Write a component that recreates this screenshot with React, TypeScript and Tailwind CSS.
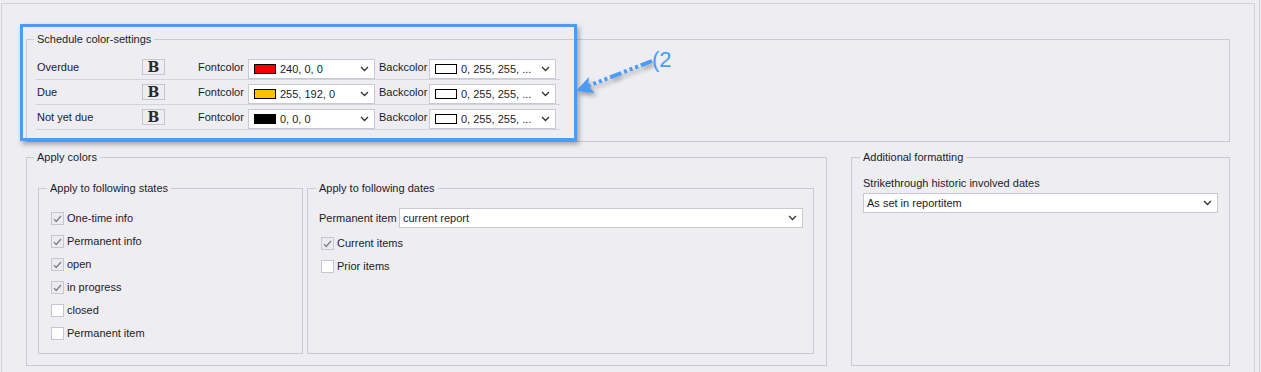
import React from 'react';

const rows = [
  { label: 'Overdue', swatch: 'bg-[#f00000]', value: '240, 0, 0' },
  { label: 'Due', swatch: 'bg-[#ffc000]', value: '255, 192, 0' },
  { label: 'Not yet due', swatch: 'bg-[#000000]', value: '0, 0, 0' },
];

const states = [
  { label: 'One-time info', checked: true },
  { label: 'Permanent info', checked: true },
  { label: 'open', checked: true },
  { label: 'in progress', checked: true },
  { label: 'closed', checked: false },
  { label: 'Permanent item', checked: false },
];

function Chevron() {
  return (
    <svg width="9" height="6" viewBox="0 0 9 6" className="shrink-0">
      <polyline points="1,1 4.5,4.5 8,1" fill="none" stroke="#333" strokeWidth="1.3" />
    </svg>
  );
}

function Check({ checked, label }: { checked: boolean; label: string }) {
  return (
    <div className="flex h-[23px] items-center gap-[3px]">
      <div
        className={`flex h-[13px] w-[13px] items-center justify-center border border-[#c6c6d2] ${
          checked ? 'bg-[#ebebf0]' : 'bg-white'
        }`}
      >
        {checked && (
          <svg width="9" height="8" viewBox="0 0 9 8">
            <polyline points="1,4.2 3.2,6.5 8,1" fill="none" stroke="#7a7a80" strokeWidth="1.2" />
          </svg>
        )}
      </div>
      <span>{label}</span>
    </div>
  );
}

function ColorSelect({ swatch, value }: { swatch: string; value: string }) {
  return (
    <div className="flex h-[20px] w-[127px] items-center self-end border border-[#c9c9d5] bg-white pl-[5px] pr-[5px]">
      <div className={`h-[10px] w-[22px] shrink-0 border border-black ${swatch}`} />
      <span className="ml-[4px] flex-1 whitespace-nowrap">{value}</span>
      <Chevron />
    </div>
  );
}

export default function App() {
  return (
    <div className="relative flex h-[372px] w-[1261px] overflow-hidden bg-[#eeedf2] font-['Liberation_Sans',Arial,sans-serif] text-[11px] leading-[15px] text-[#1c1c28]">
      <div className="ml-[1px] mt-[3px] h-[400px] w-[1254px] shrink-0 border border-[#d2d2dc] pl-[24px] pt-[28px]">
        <fieldset className="w-[1204px] border border-[#cacad6] pb-[11px] pl-[9px]">
          <legend className="ml-[-2px] px-[3px] leading-[15px]">Schedule color-settings</legend>
          <div className="pt-[8px]">
            {rows.map((r) => (
              <div key={r.label} className="flex h-[25px] w-[524px] items-center border-b border-[#d3d3dd]">
                <span className="w-[106px] pl-[1px]">{r.label}</span>
                <div className="flex h-[16px] w-[23px] items-center justify-center border border-[#c6c6d2] font-['DejaVu_Serif',serif] text-[14px] font-bold leading-none text-[#2a2a2a]">
                  B
                </div>
                <span className="ml-[33px] w-[50px]">Fontcolor</span>
                <ColorSelect swatch={r.swatch} value={r.value} />
                <span className="ml-[4px] w-[50px]">Backcolor</span>
                <ColorSelect swatch="bg-white" value="0, 255, 255, ..." />
              </div>
            ))}
          </div>
        </fieldset>

        <div className="mt-[8px] flex gap-[24px]">
          <fieldset className="w-[801px] border border-[#cacad6] pb-[11px] pl-[11px] pr-[12px]">
            <legend className="ml-[-4px] px-[3px]">Apply colors</legend>
            <div className="flex gap-[4px] pt-[16px]">
              <fieldset className="h-[173px] w-[265px] border border-[#cacad6] pl-[12px]">
                <legend className="ml-[-4px] px-[3px]">Apply to following states</legend>
                <div className="pt-[11px]">
                  {states.map((s) => (
                    <Check key={s.label} checked={s.checked} label={s.label} />
                  ))}
                </div>
              </fieldset>
              <fieldset className="h-[173px] flex-1 border border-[#cacad6] pl-[11px] pr-[10px]">
                <legend className="ml-[-3px] px-[3px]">Apply to following dates</legend>
                <div className="flex items-center pt-[12px]">
                  <span className="w-[80px]">Permanent item</span>
                  <div className="flex h-[20px] flex-1 items-center border border-[#c9c9d5] bg-white pl-[3px] pr-[5px]">
                    <span className="flex-1">current report</span>
                    <Chevron />
                  </div>
                </div>
                <div className="mt-[4px] pl-[2px]">
                  <Check checked label="Current items" />
                  <Check checked={false} label="Prior items" />
                </div>
              </fieldset>
            </div>
          </fieldset>

          <fieldset className="w-[379px] border border-[#cacad6] pl-[11px] pr-[11px]">
            <legend className="ml-[-3px] px-[3px]">Additional formatting</legend>
            <div className="pt-[11px]">Strikethrough historic involved dates</div>
            <div className="mt-[2px] flex h-[20px] items-center border border-[#c9c9d5] bg-white pl-[3px] pr-[5px]">
              <span className="flex-1">As set in reportitem</span>
              <Chevron />
            </div>
          </fieldset>
        </div>
      </div>
      <div className="ml-[4px] h-full w-px bg-[#d2d2dc]" />

      {/* annotation overlay */}
      <div className="pointer-events-none absolute left-[20px] top-[24px] h-[117px] w-[557px] border-[3px] border-[#4a9cf6] shadow-[2px_3px_5px_rgba(0,0,0,0.35)]" />
      <svg
        width="110"
        height="70"
        viewBox="0 0 110 70"
        className="pointer-events-none absolute left-[570px] top-[40px] drop-shadow-[2px_3px_2px_rgba(0,0,0,0.35)]"
      >
        <line x1="82" y1="21" x2="18" y2="46" stroke="#4a9cf6" strokeWidth="4" strokeDasharray="12 3 3 3 3 3 3 3" />
        <polygon points="6,51 18.9,37.1 18.2,46.5 24.9,53" fill="#4a9cf6" />
      </svg>
      <span className="pointer-events-none absolute left-[652px] top-[48px] font-['Liberation_Sans',Arial,sans-serif] text-[22px] leading-[24px] text-[#4a9cf6]">
        (2
      </span>
    </div>
  );
}
